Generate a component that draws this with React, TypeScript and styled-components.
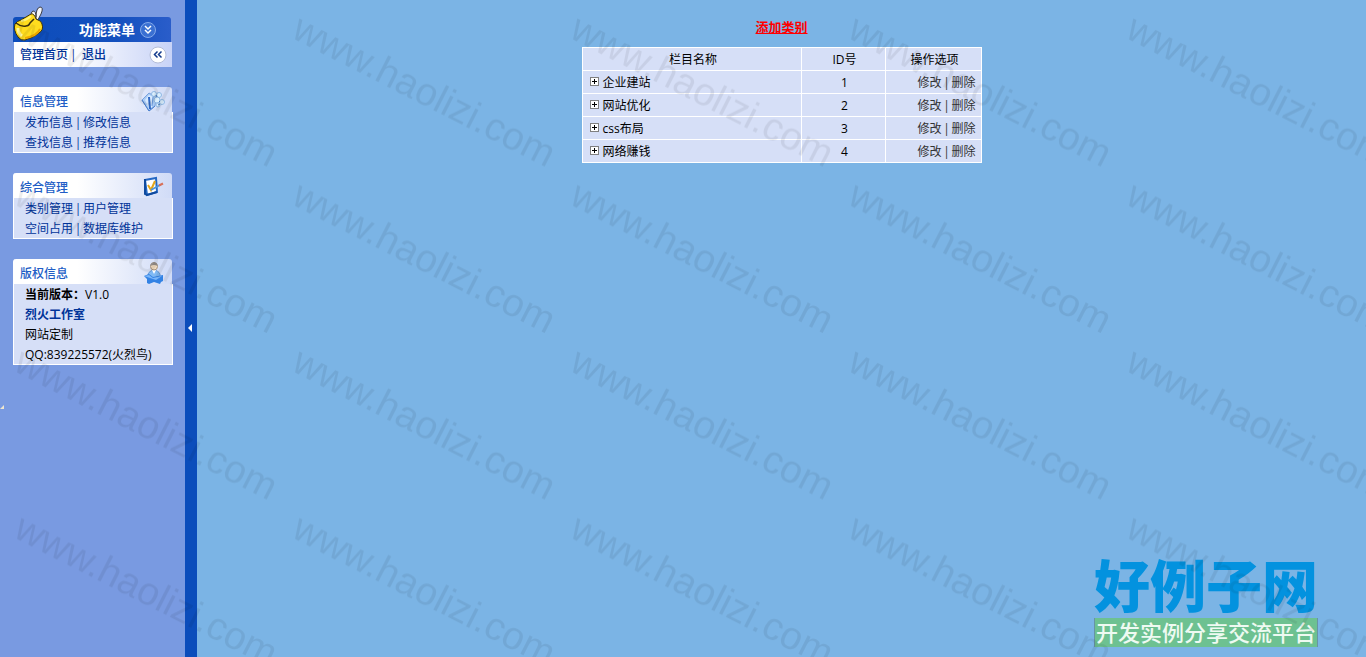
import React from "react";
import styled, { createGlobalStyle } from "styled-components";

const Global = createGlobalStyle`
  * { box-sizing: border-box; }
  body {
    margin: 0;
    background: #7bb4e5;
    font: 12px/20px "Open Sans", "Noto Sans CJK SC", sans-serif;
    color: #000;
  }
  a { text-decoration: none; color: inherit; }
`;

const Page = styled.div`
  position: relative;
  display: flex;
  min-height: 100vh;
  overflow: hidden;
`;

const Sidebar = styled.aside`
  flex: none;
  width: 185px;
  padding: 17px 12px 20px 13px;
  display: flex;
  flex-direction: column;
  gap: 20px;
  background: #799ae1;
`;

const MenuTop = styled.div`
  position: relative;
  margin-right: 1px;
`;

const MenuTitle = styled.div`
  display: flex;
  align-items: center;
  justify-content: flex-end;
  gap: 4px;
  height: 25px;
  padding-right: 14px;
  margin-right: 1px;
  border-radius: 3px 3px 0 0;
  background: linear-gradient(90deg, #0d4dbb, #1350be 65%, #2a5dca);
  color: #fff;
  font-size: 14px;
  line-height: 22px;
  font-weight: 700;
`;

const Mascot = styled.svg`
  position: absolute;
  left: 0;
  top: -12px;
`;

const MenuBar = styled.nav`
  display: flex;
  align-items: center;
  height: 25px;
  padding: 0 5px 0 6px;
  margin-left: 1px;
  background: linear-gradient(90deg, #fff 35%, #c8d3f7);
  color: #039;
  font-weight: 500;
`;

const Divider = styled.span`
  width: 14px;
  padding-left: 2px;
`;

const Separator = styled.span`
  display: inline-block;
  width: 10px;
  text-align: center;
`;

const RoundButton = styled.button`
  display: flex;
  padding: 0;
  border: 0;
  background: none;
  cursor: pointer;
`;

const PushedButton = styled(RoundButton)`
  margin-left: auto;
`;

const Panel = styled.section`
  display: flex;
  flex-direction: column;
`;

const PanelHead = styled.div`
  display: flex;
  align-items: center;
  justify-content: space-between;
  height: 25px;
  padding: 2px 7px 0 6px;
  margin-right: 1px;
  border-left: 1px solid #fff;
  border-radius: 3px 3px 0 0;
  background: linear-gradient(90deg, #fff 40%, #d0dbf7);
`;

const PanelTitle = styled.h2`
  margin: 0;
  padding-top: 3px;
  font-size: 12px;
  font-weight: 500;
  color: #215dc6;
`;

const PanelBody = styled.div<{ $plain?: boolean }>`
  padding-left: 11px;
  border: solid #fff;
  border-width: 0 1px 1px;
  background: #d6dff7;
  color: ${(p) => (p.$plain ? "#000" : "#039")};
`;

const Line = styled.div`
  height: 20px;
  line-height: 22px;
  white-space: nowrap;
`;

const StudioLink = styled.a`
  && {
    color: #039;
    font-weight: 700;
  }
`;

const Splitter = styled.button`
  flex: none;
  display: flex;
  align-items: center;
  justify-content: center;
  width: 12px;
  padding: 0 2px 2px 0;
  border: 0;
  background: #0b4dbb;
  cursor: pointer;
`;

const Main = styled.main`
  flex: 1;
  display: flex;
  flex-direction: column;
  align-items: center;
  padding-top: 17px;
`;

const AddLink = styled.a`
  && {
    color: #f00;
    font-size: 13px;
    font-weight: 700;
    text-decoration: underline;
    margin-bottom: 10px;
  }
`;

const Table = styled.table`
  width: 400px;
  table-layout: fixed;
  border-collapse: collapse;
  background: #d6dff7;

  th, td {
    height: 23px;
    padding: 2px 5px 0 8px;
    border: 1px solid #fff;
    font-weight: 400;
    text-align: center;
  }
  td:first-child { text-align: left; padding-left: 7px; }
  td:last-child { text-align: right; color: #333; }
`;

const Column = styled.col<{ $width: number }>`
  width: ${(p) => p.$width}px;
`;

const NameCell = styled.div`
  display: flex;
  align-items: center;
  gap: 4px;
`;

const Expand = styled.button`
  display: flex;
  padding: 0 0 3px;
  border: 0;
  background: none;
`;

const Watermark = styled.svg`
  position: absolute;
  inset: 0;
  width: 100%;
  height: 100%;
  pointer-events: none;
`;

const SiteBadge = styled.div`
  position: absolute;
  right: 48px;
  bottom: 10px;
  display: flex;
  flex-direction: column;
  font-family: "Noto Sans CJK SC", sans-serif;
  white-space: nowrap;
`;

const BadgeName = styled.div`
  margin-bottom: 4px;
  font-size: 56px;
  line-height: 62px;
  font-weight: 900;
  color: #0392df;
`;

const BadgeTag = styled.div`
  height: 29px;
  line-height: 26px;
  padding: 0 1px;
  font-size: 22px;
  font-weight: 500;
  color: #eefaf2;
  background: #6dc191;
  border: solid #6794a5;
  border-width: 0 1px;
`;

const Corner = styled.svg`
  position: absolute;
  left: 0;
  top: 405px;
`;

const InfoIcon = () => (
  <svg width="24" height="22" viewBox="0 0 24 22" aria-hidden="true">
    <path d="M1 10 8 3l7 4-1 9-6 5z" fill="#a9cbf5" stroke="#7aa3dc" />
    <path d="m4 10 4-5 4 2-1 10-3 2z" fill="#d8eaff" />
    <path d="m8 7 1 12" stroke="#2f68c4" strokeWidth="2" />
    <path d="M12 7l-1 9" stroke="#6a9be0" />
    <path d="M1 10 8 21l6-5" fill="none" stroke="#4a7fce" />
    <g fill="#dcf0ff" stroke="#8fb8e4">
      <circle cx="13" cy="4" r="2.500" /><circle cx="18" cy="5" r="2.500" />
      <circle cx="16" cy="10" r="3" /><circle cx="21" cy="12" r="2.500" /><circle cx="17" cy="15" r="2" />
    </g>
    <path d="m15 5 1 2m2 4 1 1m-2 3 2-1" stroke="#3f78c0" />
  </svg>
);

const CheckIcon = () => (
  <svg width="22" height="22" viewBox="0 0 22 22" aria-hidden="true">
    <path d="M2 4 13 2l1 14-10 3z" fill="#fff" stroke="#2468c4" strokeWidth="2" />
    <path d="M2 3v15l2 1 10-3" fill="none" stroke="#0f4a9f" strokeWidth="2" />
    <path d="m5 9 3 5 4-9" fill="none" stroke="#e3a51c" strokeWidth="2" />
    <path d="m8 14 9-5" stroke="#4e94dc" strokeWidth="2" />
    <path d="m16 9.500 4-2" stroke="#d8705a" strokeWidth="2" />
  </svg>
);

const PersonIcon = () => (
  <svg width="22" height="24" viewBox="0 0 22 24" aria-hidden="true">
    <path d="M5 13q2-4 6-4t6 4v5H5z" fill="#7fb9f4" stroke="#6a9ad4" />
    <path d="m9 9 2 4 2-4z" fill="#fff" />
    <circle cx="11" cy="5.500" r="3.500" fill="#f2dcc0" stroke="#a8937c" />
    <path d="M7 5q1-4 4-4t4 4q-4-2-8 0" fill="#958d88" />
    <path d="m1 15 5-2 4 3 10-2v6l-2 1-1 2-6-2-5 2-2-1v-4z" fill="#3382e4" />
    <path d="m1 15 5-1 4 3 9-2-6 4z" fill="#7ab6fa" />
  </svg>
);

const shortcuts = [
  { title: "信息管理", Icon: InfoIcon, rows: [["发布信息", "修改信息"], ["查找信息", "推荐信息"]] },
  { title: "综合管理", Icon: CheckIcon, rows: [["类别管理", "用户管理"], ["空间占用", "数据库维护"]] },
];

const categories = ["企业建站", "网站优化", "css布局", "网络赚钱"];

export default function App() {
  return (
    <Page>
      <Global />
      <Sidebar>
        <MenuTop>
          <MenuTitle>
            功能菜单
            <RoundButton aria-label="展开菜单">
              <svg width="18" height="18" viewBox="0 0 18 18">
                <circle cx="9" cy="9" r="7.5" fill="#3a70d2" stroke="#84a9ea" />
                <path d="m6 5 3 3 3-3M6 9l3 3 3-3" fill="none" stroke="#fff" strokeWidth="1.5" />
              </svg>
            </RoundButton>
          </MenuTitle>
          <MenuBar>
            <a href="#home">管理首页</a>
            <Divider>|</Divider>
            <a href="#exit">退出</a>
            <PushedButton aria-label="收起">
              <svg width="18" height="18" viewBox="0 0 18 18">
                <circle cx="9" cy="9" r="8" fill="#fff" stroke="#b4bdd8" />
                <path d="M8.500 5.500 5.500 8.500l3 3M12.500 5.500l-3 3 3 3" fill="none" stroke="#123a8c" strokeWidth="1.500" />
              </svg>
            </PushedButton>
          </MenuBar>
          <Mascot width="32" height="36" viewBox="0 0 32 36" aria-hidden="true">
            <path d="M19 15q-2-8 1-9 3 0 3 6 0-9 4-10 4 0 1 7-2 5-5 7z" fill="#f4f6fa" stroke="#3c3c44" />
            <path d="M23 12v5" stroke="#3c3c44" />
            <path d="M2 19q2-3 6-4l10-6q3-1 5 5 6 2 6 5 2 6-3 9-6 5-14 7-4 1-7-3-5-7-3-13Z" fill="#ffdc1e" stroke="#3d320c" />
            <path d="M3 18q5 4 10 3 3 0 4-3l4-4" fill="none" stroke="#3d320c" strokeWidth="1.5" />
            <path d="M5 23q0 5 4 8" fill="none" stroke="#fff59a" strokeWidth="3" />
            <path d="M8 16q6-1 10-5" fill="none" stroke="#fff27a" strokeWidth="2" />
            <path d="M12 33q12-2 15-9" fill="none" stroke="#eda900" strokeWidth="2" />
          </Mascot>
        </MenuTop>

        {shortcuts.map(({ title, Icon, rows }) => (
          <Panel key={title}>
            <PanelHead>
              <PanelTitle>{title}</PanelTitle>
              <Icon />
            </PanelHead>
            <PanelBody>
              {rows.map(([a, b]) => (
                <Line key={a}>
                  <a href="#list">{a}</a><Separator>|</Separator><a href="#list">{b}</a>
                </Line>
              ))}
            </PanelBody>
          </Panel>
        ))}

        <Panel>
          <PanelHead>
            <PanelTitle>版权信息</PanelTitle>
            <PersonIcon />
          </PanelHead>
          <PanelBody $plain>
            <Line><b>当前版本：</b>V1.0</Line>
            <Line><StudioLink href="#studio">烈火工作室</StudioLink></Line>
            <Line>网站定制</Line>
            <Line>QQ:839225572(火烈鸟)</Line>
          </PanelBody>
        </Panel>
      </Sidebar>

      <Splitter aria-label="收起侧栏">
        <svg width="6" height="10" viewBox="0 0 6 10"><path d="M5 1v8L1 5z" fill="#fff" /></svg>
      </Splitter>

      <Main>
        <AddLink href="#add">添加类别</AddLink>
        <Table>
          <colgroup>
            <Column $width={219} /><Column $width={84} /><Column $width={96} />
          </colgroup>
          <thead>
            <tr><th>栏目名称</th><th>ID号</th><th>操作选项</th></tr>
          </thead>
          <tbody>
            {categories.map((name, i) => (
              <tr key={name}>
                <td>
                  <NameCell>
                    <Expand aria-label={`展开${name}`}>
                      <svg width="9" height="9" viewBox="0 0 9 9" shapeRendering="crispEdges">
                        <path d="M.5.5h8v8h-8z" fill="#fff" stroke="#808080" />
                        <path d="M2 4.500h5M4.500 2v5" stroke="#000" />
                      </svg>
                    </Expand>
                    {name}
                  </NameCell>
                </td>
                <td>{i + 1}</td>
                <td><a href="#edit">修改</a><Separator>|</Separator><a href="#delete">删除</a></td>
              </tr>
            ))}
          </tbody>
        </Table>
      </Main>

      <Corner width="4" height="4" viewBox="0 0 4 4" aria-hidden="true">
        <path d="M4 0v4H0z" fill="#eee6d0" />
      </Corner>

      <SiteBadge>
        <BadgeName>好例子网</BadgeName>
        <BadgeTag>开发实例分享交流平台</BadgeTag>
      </SiteBadge>

      <Watermark aria-hidden="true">
        <defs>
          <pattern id="mark" x="10" y="10" width="278" height="166.500" patternUnits="userSpaceOnUse">
            <text
              transform="translate(2 27) rotate(27)"
              fontFamily="Liberation Sans, sans-serif"
              fontSize="39"
              fill="#000"
              fillOpacity="0.07"
            >
              www.haolizi.com
            </text>
          </pattern>
        </defs>
        <rect width="100%" height="100%" fill="url(#mark)" />
      </Watermark>
    </Page>
  );
}
